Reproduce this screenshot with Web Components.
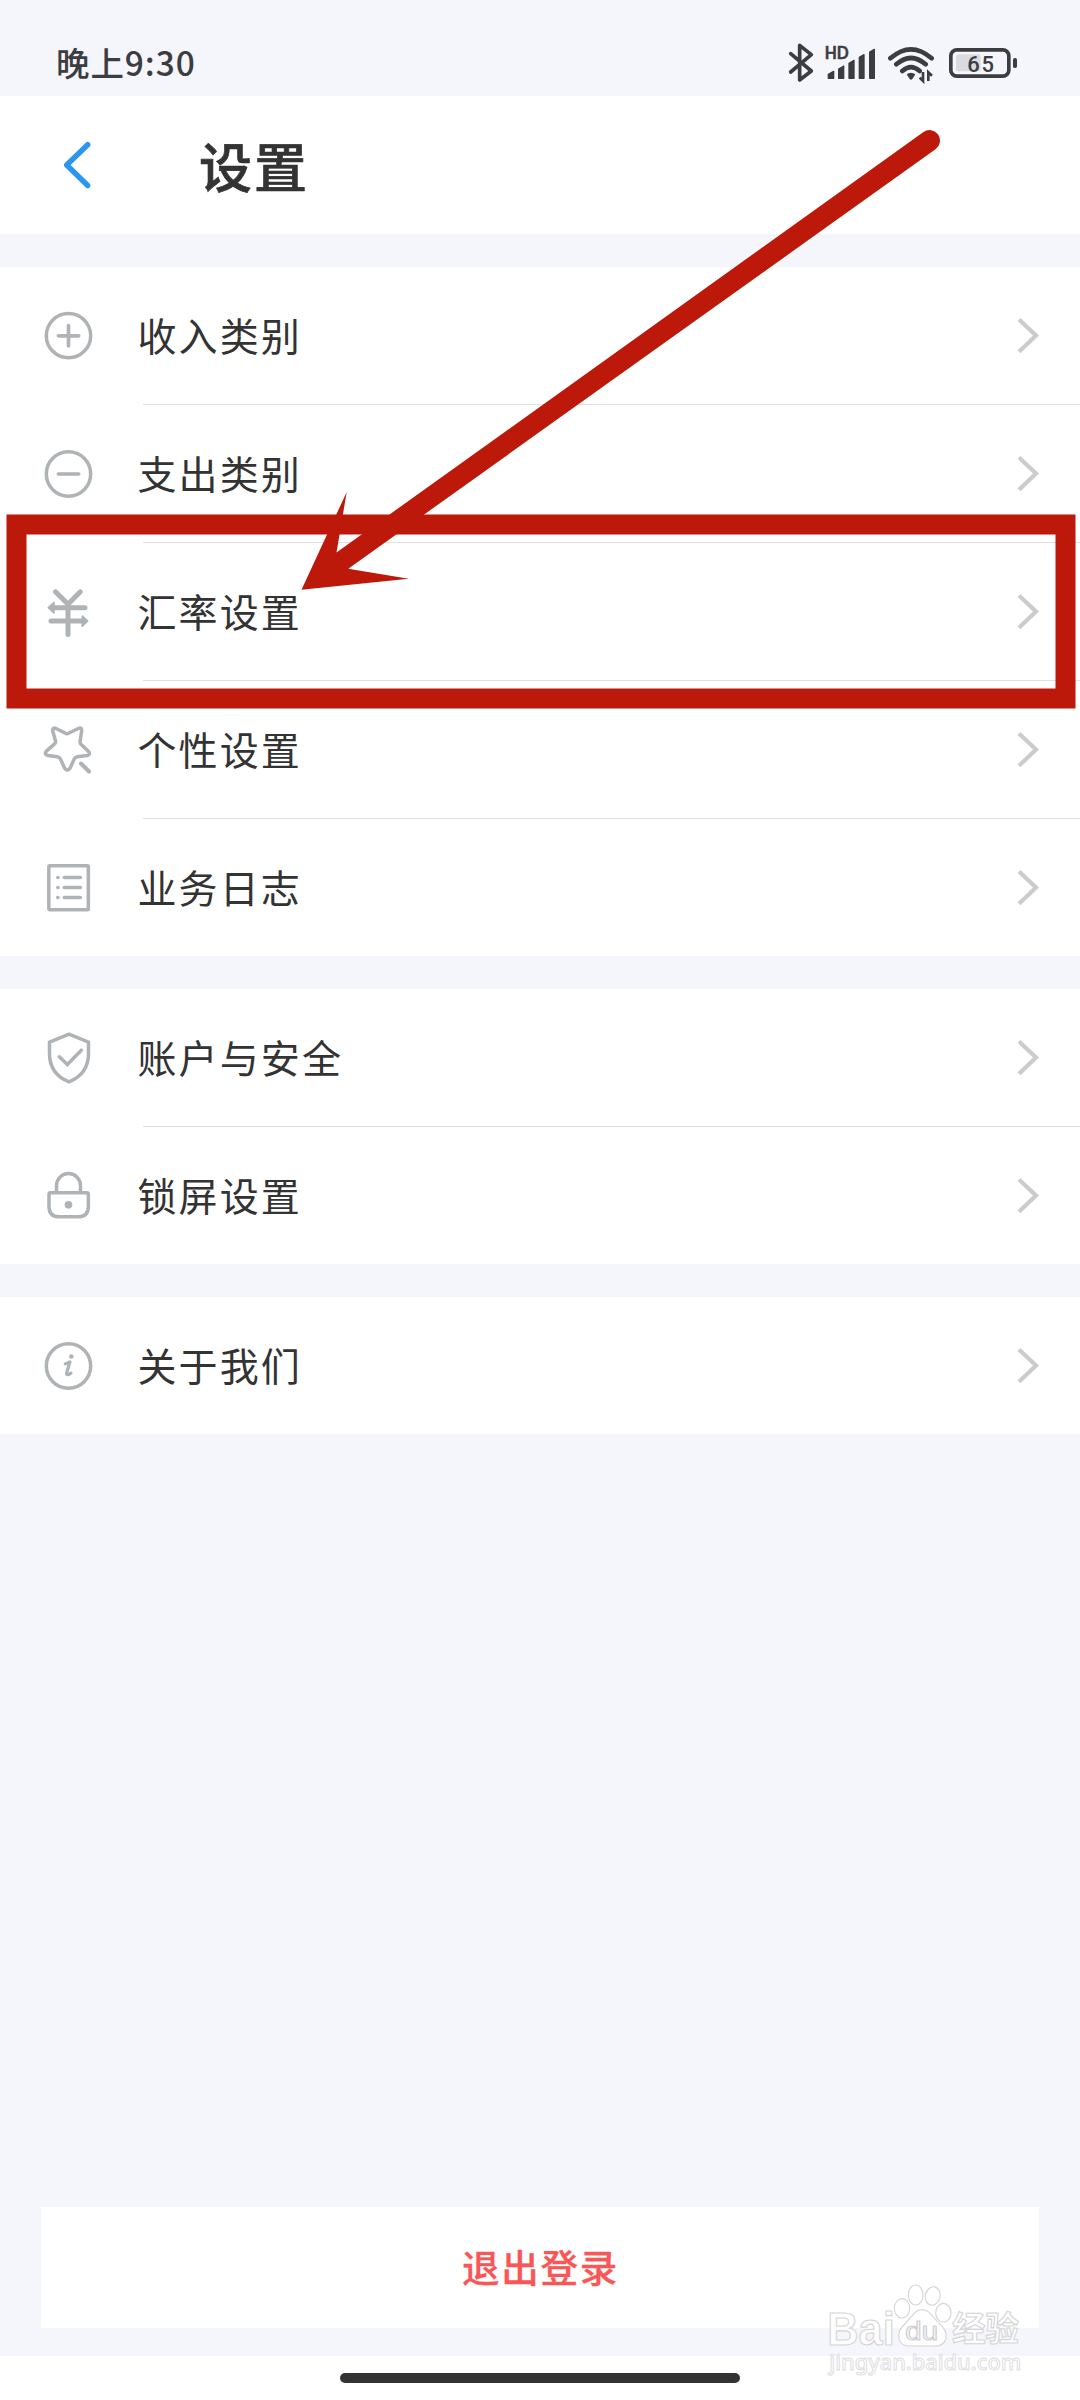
<!DOCTYPE html>
<html lang="zh-CN">
<head>
<meta charset="utf-8">
<title>设置</title>
<style>
html,body{margin:0;padding:0;background:#f5f6fb}
body{font-family:"Noto Sans CJK SC",sans-serif;color:#333}
</style>
</head>
<body>
<settings-screen></settings-screen>
<script>
const define = (name, html) => customElements.define(name, class extends HTMLElement {
  connectedCallback() {
    if (this.shadowRoot) return;
    this.attachShadow({ mode: 'open' }).innerHTML = typeof html === 'function' ? html(this) : html;
  }
});

define('status-bar', `
<style>
:host{display:flex;height:96px;box-sizing:border-box;padding:0 57px 0 56px;justify-content:space-between;color:#3c3d40}
.time{font-size:33.500px;font-weight:500;line-height:48px;margin-top:38px;letter-spacing:.9px;white-space:nowrap}
.icons{display:flex;margin-top:40px}
svg{display:block;height:45px}
</style>
<div class="time">晚上9:30</div>
<div class="icons">
<svg width="36" viewBox="81 60 108 135" fill="none" stroke="#3c3d40" stroke-width="11" stroke-linejoin="round" stroke-linecap="round"><path d="M92 101 L154 153 L119 180 V76 L154 104 L92 156"/></svg>
<svg width="60" viewBox="189 60 180 135" fill="#3c3d40" stroke="#3c3d40" stroke-width="4" stroke-linejoin="round"><text x="194" y="117" font-family="Lato" font-weight="700" font-size="49" textLength="72" lengthAdjust="spacingAndGlyphs" stroke-width="1.500">HD</text><path d="M205 163 L221 154 V175 H205Z M236 147 L251 138 V175 H236Z M267 130 L282 121 V175 H267Z M298 112 L312 104 V175 H298Z M329 96 L343 88 V175 H329Z"/></svg>
<svg width="60" viewBox="369 60 180 135" fill="none" stroke="#3c3d40" stroke-width="14" stroke-linecap="round"><path d="M391 115 Q453 61 515 115 M409 133 Q453 95 497 133 M427 153 Q453 130 479 153"/><path d="M440 163 Q453 153 466 163 L457 177 Q453 181 449 177Z" fill="#3c3d40" stroke="none"/><path d="M489 156 V183 L479 173 M505 183 V157 L516 167" stroke-width="8" stroke-linecap="butt"/></svg>
<svg width="80" viewBox="549 60 240 135"><rect x="588" y="103" width="74" height="51" rx="8" fill="#d9dbe0"/><rect x="572.5" y="89.5" width="174" height="79" rx="18" fill="none" stroke="#3c3d40" stroke-width="11"/><rect x="759" y="114" width="12" height="30" rx="5" fill="#3c3d40"/><text x="622" y="155" font-family="Roboto" font-weight="500" font-size="66" textLength="80" fill="#3c3d40">65</text></svg>
</div>`);

define('page-header', `
<style>
:host{display:flex;align-items:center;height:138px;background:#fff;box-sizing:border-box;padding-left:60px}
svg{display:block}
h1{margin:0 0 0 103px;font-size:53px;font-weight:500;line-height:78px;letter-spacing:2px;color:#333;-webkit-text-stroke:.7px #333}
</style>
<svg width="36" height="54" viewBox="60 138 36 54" fill="none" stroke="#2b95f2" stroke-width="5.4" stroke-linecap="round" stroke-linejoin="round"><path d="M87.7 144.7 L66.7 165 L87.7 185.5"/></svg>
<h1><slot></slot></h1>`);

/* Glyphs share a 198-unit box, three units to a pixel, with the row's middle at y = 99. */
const glyphs = {
  plus: '<g transform="translate(-108 -98)"><circle cx="205.5" cy="196" r="66.5"/><path d="M175 196.5H236M205.5 166V227" stroke-width="11"/></g>',
  minus: '<g transform="translate(-108 -511.5)"><circle cx="205.5" cy="610.5" r="66.5"/><path d="M175 610.5H236" stroke-width="11"/></g>',
  rate: '<g transform="translate(-108 -235.5)"><path d="M166.500 274 L204 311 L241 274 M204 311 V402 M160 321.500 H255 M153 361.500 H250" stroke-width="15"/><path d="M145 321.500 L162 306 V337Z M263 361.500 L247 347 V377Z" fill="#afb3b6" stroke-width="5"/></g>',
  star: '<g transform="translate(-108 -79.500)"><path d="M168 114 L196 128 Q201 131 206 128 L235 114 Q246 109 245 121 L240 153 Q240 158 243 161 L265 182 Q273 192 261 195 L232 199 Q226 200 223 205 L210 233 Q202 244 194 233 L181 205 Q178 200 172 199 L144 195 Q131 192 139 182 L163 161 Q167 158 167 153 L158 121 Q158 109 168 114Z"/><path d="M243 219 L267 243" stroke-width="12"/></g>',
  log: '<g transform="translate(-108 -493.500)"><rect x="146.500" y="526" width="118.500" height="132" rx="3"/><path d="M193 561H241M193 591H241M193 621H241M173.500 561H174M173.500 591H174M173.500 621H174" stroke-width="11"/></g>',
  shield: '<g transform="translate(-108 -163.500)" stroke-linecap="butt"><path d="M207 191 L265.500 215 V249 C265.500 289 244 319 207 334 C169 319 148.500 289 148.500 249 V215Z" stroke-linejoin="miter"/><path d="M178 259 L202 282 L244 239" stroke-linecap="round" stroke-linejoin="miter"/></g>',
  lock: '<g transform="translate(-108 -577.500)"><path d="M151 667 H260 Q265 667 265 672 V708 Q265 739 234 739 H178 Q147 739 147 708 V672 Q147 667 151 667Z"/><path d="M169.500 665 V646 A36 37 0 0 1 241.500 646 V665" stroke-linecap="butt"/><circle cx="205.500" cy="703" r="11.500" fill="#afb3b6" stroke="none"/></g>',
  info: '<g transform="translate(-108 -247.500)"><circle cx="205.500" cy="346.500" r="66.500"/><circle cx="214" cy="318" r="7" fill="#afb3b6" stroke="none"/><path d="M196 340 Q204 338 210 334 L200 367 Q198 378 213 368" stroke-width="9.500"/></g>'
};

define('settings-row', el => `
<style>
:host{display:flex;align-items:center;height:137px;padding:0 36px;background:#fff}
:host(:not(:last-of-type)){padding-bottom:1px;background:linear-gradient(#e0e0e0,#e0e0e0) 143px 100%/100% 1px no-repeat #fff}
svg{display:block;flex:none}
span{flex:1;margin-left:35.500px;font-size:39px;line-height:58px;padding-bottom:3px;letter-spacing:2.100px;color:#333;white-space:nowrap}
</style>
<svg width="66" height="66" viewBox="0 0 198 198" fill="none" stroke="#afb3b6" stroke-width="10.500" stroke-linecap="round" stroke-linejoin="round">${glyphs[el.getAttribute('icon')]}</svg>
<span><slot></slot></span>
<svg width="30" height="42" viewBox="0 0 30 42" fill="none" stroke="#ccc" stroke-width="4.200"><path d="M5 4.500 L22 20.500 L5 36.800"/></svg>`);

define('settings-group', `
<style>:host{display:flex;flex-direction:column;margin-top:33px}</style><slot></slot>`);

define('logout-button', `
<style>
:host{display:block;margin:0 41px 28px}
button{display:block;width:100%;height:121px;border:0;padding:0 0 3px 1px;background:#fff;color:#f95656;font:500 37.500px/56px "Noto Sans CJK SC",sans-serif;letter-spacing:1.700px;-webkit-text-stroke:.3px #f95656}
</style><button><slot></slot></button>`);

define('home-bar', `
<style>:host{display:flex;justify-content:center;height:44px;background:#fff}i{width:400px;height:10px;margin-top:17px;border-radius:5px;background:#333}</style><i></i>`);

define('arrow-callout', `
<style>:host{position:absolute;inset:0;pointer-events:none}svg{display:block}</style>
<svg width="1080" height="2400" viewBox="0 0 1080 2400"><rect x="16.500" y="524.500" width="1049" height="174" fill="none" stroke="#bc190b" stroke-width="20"/><path d="M301.500 589.700 L346.700 492 L336.500 552.500 L923.500 132 A10.300 10.300 0 0 1 935.500 149.200 L348.300 568.700 L408.700 578.700Z" fill="#bc190b"/></svg>`);

define('site-watermark', `
<style>:host{position:absolute;left:820px;top:2280px;pointer-events:none}svg{display:block}</style>
<svg width="210" height="100" viewBox="60 300 630 300" fill="#fff" fill-opacity=".85" stroke="#d6d6d8" stroke-width="3.500" stroke-linejoin="round">
<ellipse cx="306" cy="385" rx="23" ry="29"/><ellipse cx="347" cy="345" rx="22" ry="30"/><ellipse cx="398" cy="348" rx="22" ry="28" transform="rotate(12 398 348)"/><ellipse cx="430" cy="398" rx="23" ry="28"/>
<path d="M366 389 Q384 389 398 409 L429 442 Q445 463 434 485 Q424 500 397 498 H329 Q305 499 298 479 Q291 457 309 438 L337 407 Q350 389 366 389Z"/>
<text x="82" y="494" font-family="Liberation Sans" font-weight="700" font-size="136" textLength="202" lengthAdjust="spacingAndGlyphs">Bai</text>
<text x="316" y="480" font-family="Liberation Sans" font-size="78" textLength="98" lengthAdjust="spacingAndGlyphs" stroke="#cfcfd2">du</text>
<text x="456" y="484" font-family="Noto Sans CJK SC" font-weight="700" font-size="101" textLength="201">经验</text>
<text x="88" y="571" font-family="Noto Sans" font-weight="500" font-size="66" textLength="576" lengthAdjust="spacingAndGlyphs" stroke="#dedee0" stroke-width="3">jingyan.baidu.com</text>
</svg>`);

define('settings-screen', `
<style>
:host{display:flex;flex-direction:column;position:relative;width:1080px;height:2400px;background:#f5f6fb;overflow:hidden}
main{flex:1}
</style>
<status-bar></status-bar>
<page-header>设置</page-header>
<main>
<settings-group>
<settings-row icon="plus">收入类别</settings-row>
<settings-row icon="minus">支出类别</settings-row>
<settings-row icon="rate">汇率设置</settings-row>
<settings-row icon="star">个性设置</settings-row>
<settings-row icon="log">业务日志</settings-row>
</settings-group>
<settings-group>
<settings-row icon="shield">账户与安全</settings-row>
<settings-row icon="lock">锁屏设置</settings-row>
</settings-group>
<settings-group>
<settings-row icon="info">关于我们</settings-row>
</settings-group>
</main>
<logout-button>退出登录</logout-button>
<home-bar></home-bar>
<arrow-callout></arrow-callout>
<site-watermark></site-watermark>`);
</script>
</body>
</html>
